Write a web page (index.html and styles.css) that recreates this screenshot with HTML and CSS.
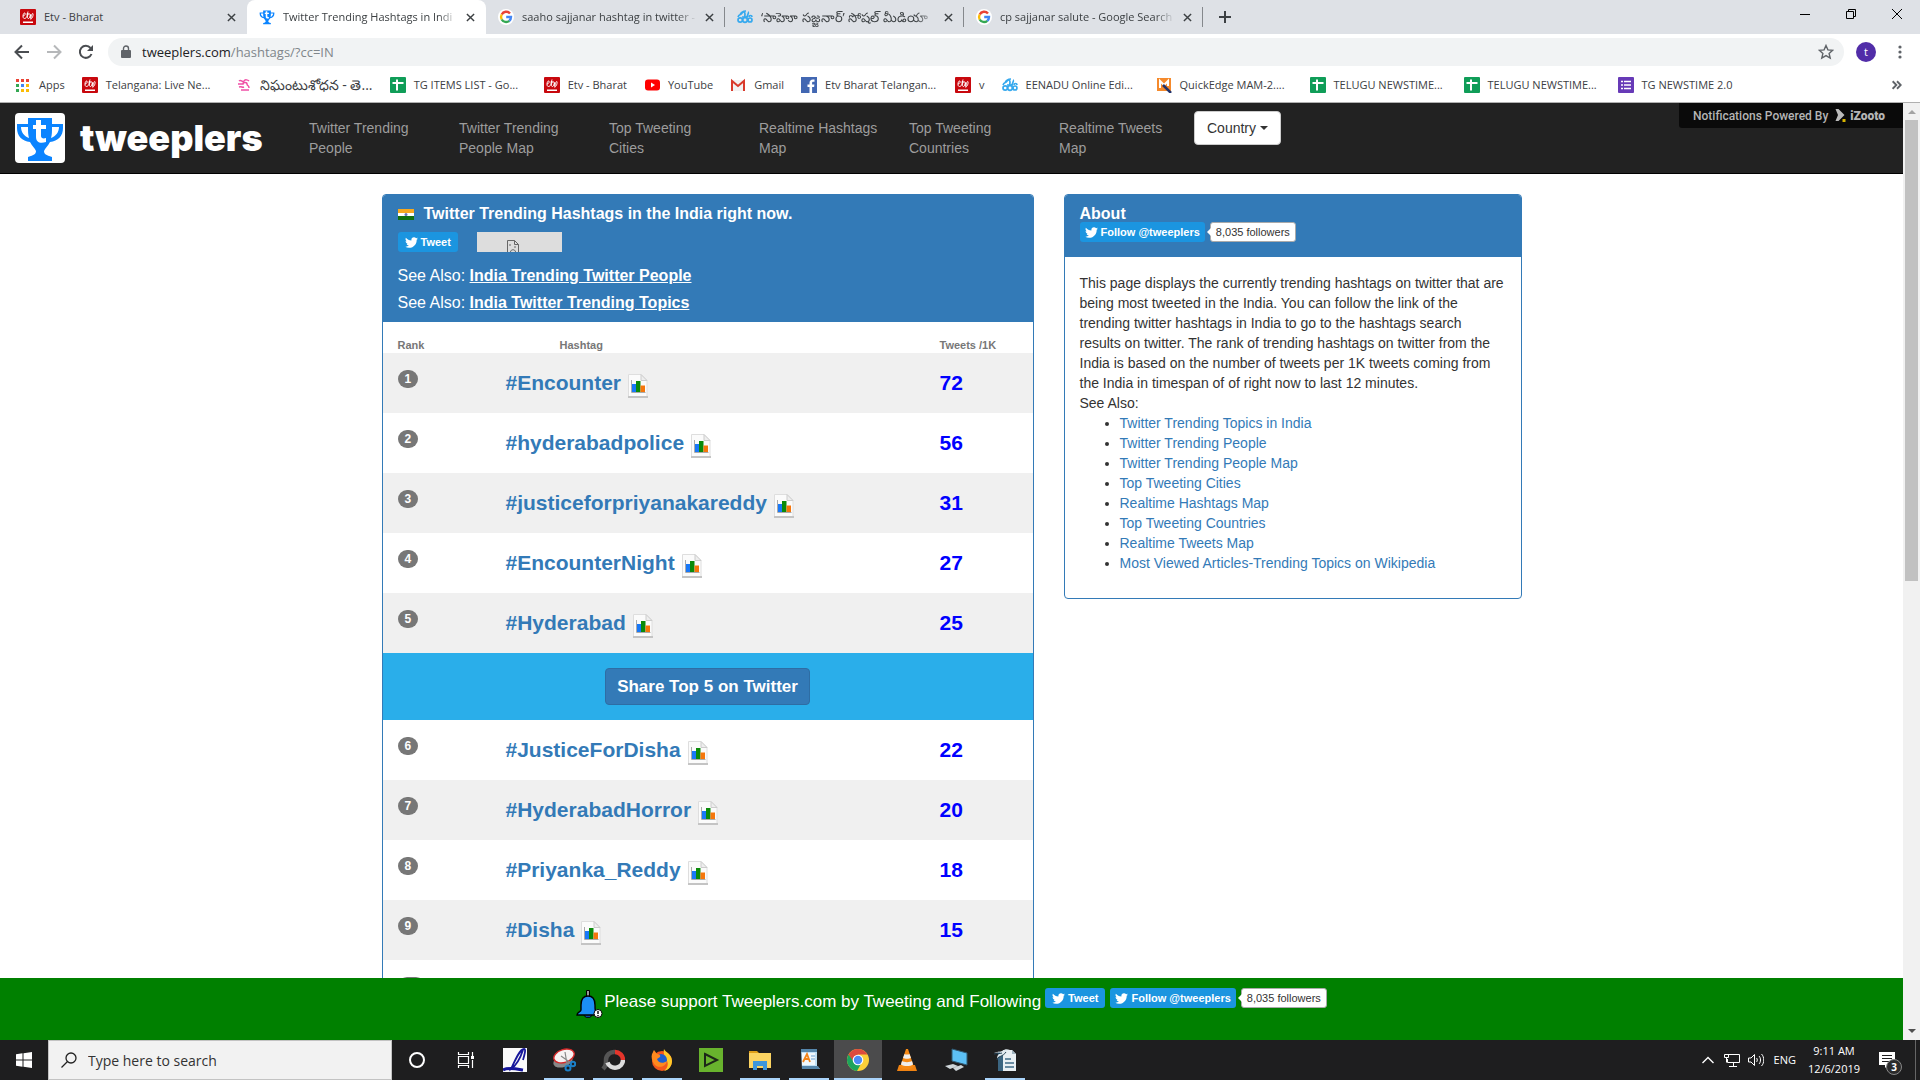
FILE: index.html
```html
<!DOCTYPE html>
<html lang="en">
<head>
<meta charset="utf-8">
<title>Twitter Trending Hashtags in India</title>
<link rel="stylesheet" href="styles.css">
</head>
<body>
<svg class="sprite" aria-hidden="true">
  <symbol id="etv" viewBox="0 0 16 16"><path fill="#c8080e" d="M1 0h14a1 1 0 0 1 1 1v14a1 1 0 0 1-1 1H1a1 1 0 0 1-1-1V1a1 1 0 0 1 1-1z"/><path fill="none" stroke="#fff" stroke-width="1" d="M3 7c2 0 3-3 1.500-3S2 9.500 4.500 9.500 7 6 8 2.500M6.500 5H10M8 4.500c-1 4-.5 5 .5 5s1.500-2 2-4c0 3 0 4 .7 4 1.500 0 2.500-5 1.500-5s-1.500 3-2 6"/><path fill="#fff" d="M3 12.500h10V14H3z"/></symbol>
  <symbol id="google" viewBox="0 0 16 16"><circle cx="8" cy="8" r="8" fill="#fff"/><g fill="none" stroke-width="2.400"><path stroke="#ea4335" d="M12 4.500A5 5 0 0 0 3.700 5.500"/><path stroke="#fbbc05" d="M3.700 5.500a5 5 0 0 0 0 5"/><path stroke="#34a853" d="M3.700 10.500a5 5 0 0 0 7.600 1.300"/><path stroke="#4285f4" d="M11.300 11.800A5 5 0 0 0 13 8H8.200"/></g></symbol>
  <symbol id="eenadu" viewBox="0 0 16 16"><g fill="none" stroke="#36a9ee" stroke-width="1.700"><circle cx="3.200" cy="11" r="2.200"/><circle cx="8" cy="11" r="2.300"/><circle cx="13" cy="11" r="2"/><path d="M1 8c1-3 3-2 4-4s3-1 3 1-1 3 1 3 2-5 3-5M5 8h6M12 8c0-2 3-2 3 0M3 6c1-3 4-4 6-4"/></g></symbol>
  <symbol id="sheet" viewBox="0 0 16 16"><rect width="16" height="16" rx="1" fill="#0f9d58"/><path stroke="#fff" stroke-width="2" d="M7 2.500v11M2.500 6h11"/></symbol>
  <symbol id="bird" viewBox="0 0 24 24"><path fill="#fff" d="M23.950 4.570a10 10 0 0 1-2.820.77 4.960 4.960 0 0 0 2.160-2.720c-.95.55-2 .95-3.130 1.180a4.920 4.920 0 0 0-8.380 4.480C7.690 8.090 4.070 6.130 1.640 3.160a4.820 4.820 0 0 0-.67 2.480c0 1.710.87 3.210 2.190 4.100a4.900 4.900 0 0 1-2.230-.62v.06a4.920 4.920 0 0 0 3.950 4.830 5 5 0 0 1-2.210.08 4.940 4.940 0 0 0 4.600 3.420A9.870 9.870 0 0 1 0 19.540a14 14 0 0 0 7.560 2.210c9.050 0 14-7.500 14-13.980 0-.21 0-.42-.02-.63a9.940 9.940 0 0 0 2.460-2.550z"/></symbol>
  <symbol id="chart" viewBox="0 0 20 24"><path fill="#fbfbfb" stroke="#dedede" d="M.5.500h12.500l6 6v17H.500z"/><path fill="#eee" stroke="#ccc" d="M13 .5v6h6z"/><path fill="#c4c4c4" d="M0 22h20v2H0z"/><path fill="none" stroke="#aaa" d="M3.500 6v12.500h14"/><path fill="#1878f8" d="M4 10h4v8H4z"/><path fill="#0a8a0a" d="M8 7h4.500v11H8z"/><path fill="#f5760c" d="M12.500 11.500H17V18h-4.500z"/></symbol>
  <symbol id="trophy" viewBox="0 0 50 50"><path fill="#0b84ff" d="M13 5h24v6h11v4c0 8-5 13-13 14-2 4-5 6-6 9 0 3 2 4 8 6v4H13v-4c6-2 8-3 8-6-1-3-4-5-6-9C7 28 2 23 2 15v-4h11z"/><path fill="#fff" d="M6 14h7c0 4 0 8 1 11-5-2-8-6-8-11zm38 0h-7c0 4 0 8-1 11 5-2 8-6 8-11zM21 7h5v5h5v4h-5v7c0 2 2 3 5 2v4c-6 2-10 0-10-5v-8h-3v-4h3z"/></symbol>
  <symbol id="close" viewBox="0 0 10 10"><path stroke="#3c4043" stroke-width="1.600" d="m1 1 8 8M9 1 1 9"/></symbol>
</svg>

<header class="browser">
  <div class="tabs">
    <div class="tab"><svg class="fav"><use href="#etv"/></svg><span class="tab-title">Etv - Bharat</span><button class="tab-close" aria-label="Close tab"><svg><use href="#close"/></svg></button></div>
    <div class="tab tab-active"><svg class="fav"><use href="#trophy"/></svg><span class="tab-title fade">Twitter Trending Hashtags in Indi</span><button class="tab-close" aria-label="Close tab"><svg><use href="#close"/></svg></button></div>
    <div class="tab tab-line"><svg class="fav"><use href="#google"/></svg><span class="tab-title fade">saaho sajjanar hashtag in twitter -</span><button class="tab-close" aria-label="Close tab"><svg><use href="#close"/></svg></button></div>
    <div class="tab tab-line"><svg class="fav"><use href="#eenadu"/></svg><span class="tab-title fade telugu" lang="te">‘సాహెూ సజ్జనార్’ సోషల్ మీడియా</span><button class="tab-close" aria-label="Close tab"><svg><use href="#close"/></svg></button></div>
    <div class="tab tab-line"><svg class="fav"><use href="#google"/></svg><span class="tab-title fade">cp sajjanar salute - Google Search</span><button class="tab-close" aria-label="Close tab"><svg><use href="#close"/></svg></button></div>
    <button class="new-tab" aria-label="New tab"><svg viewBox="0 0 12 12"><path stroke="#3c4043" stroke-width="2" d="M6 0v12M0 6h12"/></svg></button>
    <div class="window-buttons">
      <button aria-label="Minimize"><svg viewBox="0 0 10 10"><path stroke="#000" d="M0 5.500h10"/></svg></button>
      <button aria-label="Restore"><svg viewBox="0 0 10 10"><path fill="none" stroke="#000" d="M.5 2.500h7v7h-7zM2.500 2.500v-2h7v7h-2"/></svg></button>
      <button aria-label="Close"><svg viewBox="0 0 10 10"><path stroke="#000" d="m0 0 10 10M10 0 0 10"/></svg></button>
    </div>
  </div>
  <div class="toolbar">
    <button aria-label="Back"><svg viewBox="0 0 16 16"><path fill="none" stroke="#4a4d51" stroke-width="2" d="M15 8H2M8 1.500 1.500 8 8 14.500"/></svg></button>
    <button aria-label="Forward"><svg viewBox="0 0 16 16"><path fill="none" stroke="#b6b8ba" stroke-width="2" d="M1 8h13M8 1.500 14.500 8 8 14.500"/></svg></button>
    <button aria-label="Reload"><svg viewBox="0 0 16 16"><path fill="none" stroke="#4a4d51" stroke-width="2" d="M13.500 10A6 6 0 1 1 12.500 4"/><path fill="#4a4d51" d="M15 1v6H9z"/></svg></button>
    <div class="address">
      <svg class="lock" viewBox="0 0 10 14"><path fill="#5f6368" d="M1 5h8a1 1 0 0 1 1 1v6a1 1 0 0 1-1 1H1a1 1 0 0 1-1-1V6a1 1 0 0 1 1-1z"/><path fill="none" stroke="#5f6368" stroke-width="1.400" d="M2.500 6V3.500a2.500 2.500 0 0 1 5 0V6"/></svg>
      <span class="url">tweeplers.com<span>/hashtags/?cc=IN</span></span>
      <button class="star" aria-label="Bookmark this page"><svg viewBox="0 0 16 16"><path fill="none" stroke="#5f6368" stroke-width="1.400" d="m8 1.500 1.900 4.400 4.800.4-3.600 3.100 1.100 4.700L8 11.600l-4.200 2.500 1.100-4.700L1.300 6.300l4.800-.4z"/></svg></button>
    </div>
    <span class="avatar">t</span>
    <button class="kebab" aria-label="Menu"><svg viewBox="0 0 4 16"><g fill="#5f6368"><circle cx="2" cy="3" r="1.600"/><circle cx="2" cy="8" r="1.600"/><circle cx="2" cy="13" r="1.600"/></g></svg></button>
  </div>
  <nav class="bookmarks" aria-label="Bookmarks">
    <a href="#"><svg class="fav" viewBox="0 0 16 16"><path fill="#ea4335" d="M1 2h3v3H1zm5 0h3v3H6zm5 0h3v3h-3z"/><path fill="#34a853" d="M1 7h3v3H1zm0 5h3v3H1z"/><path fill="#4285f4" d="M6 7h3v3H6z"/><path fill="#fbbc05" d="M11 7h3v3h-3zm-5 5h3v3H6zm5 0h3v3h-3z"/></svg>Apps</a>
    <a href="#" class="long"><svg class="fav"><use href="#etv"/></svg>Telangana: Live Ne...</a>
    <a href="#" class="long telugu" lang="te"><svg class="fav" viewBox="0 0 16 16"><g fill="none" stroke="#f04fa6" stroke-width="1.500"><path d="M3 4c2-2 4 2 5 0s4-1 5 0M2 7h5c0-2 4-2 4 0s2 1 2 4M3 10c3-1 3 1 5 0M5 13h8"/></g></svg>నిఘంటుశోధన - తె...</a>
    <a href="#" class="long"><svg class="fav"><use href="#sheet"/></svg>TG ITEMS LIST - Go...</a>
    <a href="#"><svg class="fav"><use href="#etv"/></svg>Etv - Bharat</a>
    <a href="#"><svg class="fav" viewBox="0 0 16 16"><rect x="1" y="2.500" width="15" height="11" rx="3" fill="#f00"/><path fill="#fff" d="m7 5.500 4 2.500-4 2.500z"/></svg>YouTube</a>
    <a href="#"><svg class="fav" viewBox="0 0 16 16"><path fill="#f2f2f2" d="M1 3h14v11H1z"/><path fill="none" stroke="#d93a2b" stroke-width="2" d="M2 14V4l6 5 6-5v10"/></svg>Gmail</a>
    <a href="#" class="long"><svg class="fav" viewBox="0 0 16 16"><path fill="#4267b2" d="M0 0h16v16H0z"/><path fill="#fff" d="M8.500 16v-6H6.500V7.500h2V6c0-2.300 1.300-3.500 3.400-3.500h1.600v2.300h-1.200c-.9 0-1.200.5-1.200 1.200v1.500h2.300l-.3 2.500h-2v6z"/></svg>Etv Bharat Telangan...</a>
    <a href="#"><svg class="fav"><use href="#etv"/></svg>v</a>
    <a href="#" class="long"><svg class="fav"><use href="#eenadu"/></svg>EENADU Online Edi...</a>
    <a href="#" class="long"><svg class="fav" viewBox="0 0 16 16"><path fill="#f58a2c" d="M1 1h14v13H1z"/><path fill="none" stroke="#fff" stroke-width="2" d="M4 11V4l4 4 4-4v5"/><path stroke="#22336b" stroke-width="2.500" d="m7 8 8 8"/></svg>QuickEdge MAM-2....</a>
    <a href="#" class="long"><svg class="fav"><use href="#sheet"/></svg>TELUGU NEWSTIME...</a>
    <a href="#" class="long"><svg class="fav"><use href="#sheet"/></svg>TELUGU NEWSTIME...</a>
    <a href="#" class="long"><svg class="fav" viewBox="0 0 16 16"><rect width="16" height="16" rx="1" fill="#673ab7"/><path stroke="#fff" stroke-width="1.600" d="M3 4.500h2m1 0h7M3 8h2m1 0h7M3 11.500h2m1 0h7"/></svg>TG NEWSTIME 2.0</a>
    <button class="more" aria-label="More bookmarks"><svg viewBox="0 0 8 8"><path fill="none" stroke="#5f6368" stroke-width="1.500" d="m.5 1 3 3-3 3m3.500-6 3 3-3 3"/></svg></button>
  </nav>
</header>

<div class="viewport">
  <div class="page">
    <header class="navbar">
      <a href="#" class="brand"><svg viewBox="0 0 50 50"><rect width="50" height="50" rx="4" fill="#fff"/><use href="#trophy"/></svg>tweeplers</a>
      <nav class="menu" aria-label="Main">
        <a href="#">Twitter Trending People</a>
        <a href="#">Twitter Trending People Map</a>
        <a href="#">Top Tweeting Cities</a>
        <a href="#">Realtime Hashtags Map</a>
        <a href="#">Top Tweeting Countries</a>
        <a href="#">Realtime Tweets Map</a>
      </nav>
      <button class="country">Country<i class="caret"></i></button>
      <a href="#" class="powered">Notifications Powered By <svg viewBox="0 0 10 14"><path fill="#bbb" d="M0 0h3l6 6-6 6H0l2.500-6z"/><path fill="#d8b400" d="M7 10h3v3H7z"/></svg><b>iZooto</b></a>
    </header>

    <main class="content">
      <section class="panel">
        <div class="panel-head">
          <h1><svg class="flag" viewBox="0 0 16 11"><path fill="#f7a820" d="M0 0h16v4H0z"/><path fill="#fff" d="M0 4h16v3H0z"/><path fill="#12700f" d="M0 7h16v4H0z"/><circle cx="8" cy="5.500" r="1.500" fill="#6a74b8"/></svg>Twitter Trending Hashtags in the India right now.</h1>
          <div class="social">
            <a href="#" class="tw"><svg><use href="#bird"/></svg>Tweet</a>
            <span class="blocked"><svg viewBox="0 0 12 14"><path fill="none" stroke="#666" d="M.5 14V.500h7l4 4V14M7.500.500v4h4"/><path stroke="#666" d="M3 4v2M8 6v2"/><path fill="none" stroke="#666" d="M3.500 12c0-3 5-3 5 0"/></svg></span>
          </div>
          <p>See Also: <a href="#">India Trending Twitter People</a></p>
          <p>See Also: <a href="#">India Twitter Trending Topics</a></p>
        </div>
        <table class="ranks">
          <thead><tr><th class="c-rank">Rank</th><th class="c-tag">Hashtag</th><th class="c-num">Tweets /1K</th></tr></thead>
          <tbody>
            <tr class="odd"><td><span class="badge">1</span></td><td><a href="#">#Encounter<svg><use href="#chart"/></svg></a></td><td>72</td></tr>
            <tr><td><span class="badge">2</span></td><td><a href="#">#hyderabadpolice<svg><use href="#chart"/></svg></a></td><td>56</td></tr>
            <tr class="odd"><td><span class="badge">3</span></td><td><a href="#">#justiceforpriyanakareddy<svg><use href="#chart"/></svg></a></td><td>31</td></tr>
            <tr><td><span class="badge">4</span></td><td><a href="#">#EncounterNight<svg><use href="#chart"/></svg></a></td><td>27</td></tr>
            <tr class="odd"><td><span class="badge">5</span></td><td><a href="#">#Hyderabad<svg><use href="#chart"/></svg></a></td><td>25</td></tr>
            <tr class="share"><td colspan="3"><button>Share Top 5 on Twitter</button></td></tr>
            <tr><td><span class="badge">6</span></td><td><a href="#">#JusticeForDisha<svg><use href="#chart"/></svg></a></td><td>22</td></tr>
            <tr class="odd"><td><span class="badge">7</span></td><td><a href="#">#HyderabadHorror<svg><use href="#chart"/></svg></a></td><td>20</td></tr>
            <tr><td><span class="badge">8</span></td><td><a href="#">#Priyanka_Reddy<svg><use href="#chart"/></svg></a></td><td>18</td></tr>
            <tr class="odd"><td><span class="badge">9</span></td><td><a href="#">#Disha<svg><use href="#chart"/></svg></a></td><td>15</td></tr>
            <tr><td><span class="badge">10</span></td><td></td><td></td></tr>
          </tbody>
        </table>
      </section>

      <aside class="panel">
        <div class="panel-head about-head">
          <h2>About</h2>
          <div class="social">
            <a href="#" class="tw tw-follow"><svg><use href="#bird"/></svg>Follow @tweeplers</a>
            <a href="#" class="count">8,035 followers</a>
          </div>
        </div>
        <div class="about-body">
          <p>This page displays the currently trending hashtags on twitter that are being most tweeted in the India. You can follow the link of the trending twitter hashtags in India to go to the hashtags search results on twitter. The rank of trending hashtags on twitter from the India is based on the number of tweets per 1K tweets coming from the India in timespan of of right now to last 12 minutes.</p>
          <p>See Also:</p>
          <ul>
            <li><a href="#">Twitter Trending Topics in India</a></li>
            <li><a href="#">Twitter Trending People</a></li>
            <li><a href="#">Twitter Trending People Map</a></li>
            <li><a href="#">Top Tweeting Cities</a></li>
            <li><a href="#">Realtime Hashtags Map</a></li>
            <li><a href="#">Top Tweeting Countries</a></li>
            <li><a href="#">Realtime Tweets Map</a></li>
            <li><a href="#">Most Viewed Articles-Trending Topics on Wikipedia</a></li>
          </ul>
        </div>
      </aside>
    </main>

    <footer class="support">
      <svg class="bell" viewBox="0 0 27 28"><path fill="#999" stroke="#000" d="M10.500.500h3v7h-3z"/><path fill="#0a4a9e" stroke="#000" d="M8 24c0 5 8 5 8 0z"/><path fill="#1b8ef5" stroke="#000" stroke-width="1.400" d="M12 6c-5 0-7 4-7 9v5c0 2-4 2-4 5h20v-3c-2-1-2-2-2-7 0-5-2-9-7-9z"/><circle cx="22" cy="23.500" r="4" fill="#fff" stroke="#000"/><path stroke="#000" stroke-width="1.400" d="M22 21v3m0 1v1.200"/></svg>
      <span>Please support Tweeplers.com by Tweeting and Following</span>
      <div class="social">
        <a href="#" class="tw"><svg><use href="#bird"/></svg>Tweet</a>
        <a href="#" class="tw tw-follow"><svg><use href="#bird"/></svg>Follow @tweeplers</a>
        <a href="#" class="count">8,035 followers</a>
      </div>
    </footer>
  </div>
  <div class="scrollbar"><i class="up"></i><div class="track"><div class="thumb"></div></div><i class="down"></i></div>
</div>

<footer class="taskbar">
  <button class="start" aria-label="Start"><svg viewBox="0 0 16 16"><path fill="#fff" d="M0 2.200 6.500 1.300v6.200H0zM7.500 1.200 16 0v7.500H7.500zM0 8.500h6.500v6.200L0 13.800zm7.500 0H16V16l-8.500-1.200z"/></svg></button>
  <label class="search"><svg viewBox="0 0 16 16"><circle cx="10" cy="6" r="5" fill="none" stroke="#222" stroke-width="1.300"/><path stroke="#222" stroke-width="1.300" d="M6.500 9.500.500 15.500"/></svg><input type="text" placeholder="Type here to search" aria-label="Search"></label>
  <div class="apps">
    <button aria-label="Cortana"><svg viewBox="0 0 24 24"><circle cx="12" cy="12" r="7" fill="none" stroke="#fff" stroke-width="2"/></svg></button>
    <button aria-label="Task view"><svg viewBox="0 0 24 24"><path fill="none" stroke="#fff" stroke-width="1.200" d="M4.500 8.500h10v7h-10zM4.500 4v2.500h10V4M4.500 20v-2.500h10V20M18.500 4v4m0 4v8"/><path fill="#fff" d="M17 8h3v3h-3z"/></svg></button>
    <button aria-label="Editor"><svg viewBox="0 0 24 24"><path fill="#fafafa" d="M0 0h24v24H0z"/><path fill="none" stroke="#16169b" stroke-width="1.800" d="M20 12c2-7 3-11 1-11-4 0-8 9-13 20 6-4 9-10 12-19"/><path fill="none" stroke="#16169b" stroke-width="3" d="M0 22c5-3 14-1 20 0"/></svg></button>
    <button class="open" aria-label="Snipping Tool"><svg viewBox="0 0 24 24"><ellipse cx="11" cy="13" rx="10" ry="6" fill="#888" transform="rotate(-20 11 13)"/><ellipse cx="12" cy="8" rx="10.500" ry="6.500" fill="#f6f2f2" stroke="#d42a2a" stroke-width="1.400" transform="rotate(-18 12 8)"/><path stroke="#888" stroke-width="1.200" d="m13 4 2 12M9 8l10 7"/><g fill="none" stroke="#1c80c8" stroke-width="2"><circle cx="16" cy="20" r="2.500"/><circle cx="21" cy="16" r="2.200"/></g></svg></button>
    <button class="open" aria-label="Recorder"><svg viewBox="0 0 24 24"><g fill="none" stroke-width="4.500"><path stroke="#555" d="M2 21c3-3 3-5 3-9a8 8 0 0 1 9-8"/><path stroke="#e5352b" d="M14 4a8 8 0 0 1 8 8"/><path stroke="#ddd" d="M22 12a8 8 0 0 1-15.500 2.500"/></g></svg></button>
    <button class="open" aria-label="Firefox"><svg viewBox="0 0 24 24"><circle cx="12" cy="13" r="10" fill="#f4581c"/><path fill="#ffc929" d="M14 1c1 3 8 5 8 12 0 5-3 9-8 10 4-3 5-8 2-12-1-2-3-6-2-10z"/><circle cx="11" cy="12" r="6" fill="#1d5fd0"/><path fill="#ff8a1e" d="M2 6c1-1 1-3 2-4l3 4c2 0 4 1 3 3l-3 2c1 4 6 5 10 2-1 6-9 8-13 3C2 13 1 9 2 6z"/></svg></button>
    <button aria-label="Camtasia"><svg viewBox="0 0 24 24"><path fill="#68b32d" d="M0 0h24v24H0z"/><path fill="none" stroke="#1c2718" stroke-width="2" d="m6 6 12 6-12 6z"/></svg></button>
    <button class="open" aria-label="File Explorer"><svg viewBox="0 0 24 24"><path fill="#e0a019" d="M1 3h8l2 2H1z"/><path fill="#fcd462" d="M1 5h22v15H1z"/><path fill="#3d96da" d="M5 13h14v9h-4v-4H9v4H5z"/></svg></button>
    <button class="open" aria-label="WordPad"><svg viewBox="0 0 24 24"><path fill="#bfe0f6" d="M4 1h16v17l3 3H5z"/><path fill="#5586ab" d="M4 1h16v3H4zM5 21h18l-2-3H5z"/><path fill="#f0f8fd" d="M5 5h13v12H5z"/><path fill="none" stroke="#f28318" stroke-width="1.800" d="m6 14 4-8 3 8M7 11h5"/><path stroke="#6ba1d5" d="M14 8h4m-4 3h4"/></svg></button>
    <button class="open current" aria-label="Chrome"><svg viewBox="0 0 24 24"><circle cx="12" cy="12" r="11" fill="#fbcf38"/><path fill="#dd4b3e" d="M2.500 6.500a11 11 0 0 1 19 0H12L7 14z"/><path fill="#1ca45c" d="M2.500 6.500A11 11 0 0 0 11 23l5-9-8 0z"/><circle cx="12" cy="12" r="5.300" fill="#fff"/><circle cx="12" cy="12" r="4.200" fill="#4c8bf5"/></svg></button>
    <button aria-label="VLC"><svg viewBox="0 0 24 24"><path fill="#f08312" d="m4 17-2 6h20l-2-6z"/><path fill="#f58a16" d="M11 1h2l6 18c-3 3-11 3-14 0z"/><path fill="#eee" d="m9.500 6-1.500 4c2 1 6 1 8 0l-1.500-4c-1 .8-4 .8-5 0zM7 13l-1 3.500c3 2 9 2 12 0L17 13c-2 1.500-8 1.500-10 0z"/></svg></button>
    <button aria-label="Remote Desktop"><svg viewBox="0 0 24 24"><path fill="#5cc0f5" d="m8 1 15 4v12L8 13z"/><path fill="none" stroke="#315a73" d="m8 1 15 4v12L8 13z"/><path fill="#cfd6da" d="m1 18 8-2 5 2-8 3zM9 20l8-3 3 2-8 4z"/></svg></button>
    <button class="open" aria-label="Writer"><svg viewBox="0 0 24 24"><path fill="#3b6580" d="M5 4h14v19H5z"/><path fill="#e9f0f4" d="M10 2h9l4 4v17H10z"/><path fill="#9fb4c0" d="M19 2v4h4z"/><path stroke="#3f6b86" stroke-width="1.600" d="M12 11h6m-6 4h9m-9 4h9"/><path fill="#dfe8ed" d="M1 5c5-2 6-1 8-2 3-2 5-2 8-1-4 0-4 3-7 5-2 2-5 1-6 4 0-4 2-5 4-6-3-1-4 0-7 0z"/><path fill="none" stroke="#274456" d="M1 6c4-1 6 0 8-1m-5 7c0-4 6-3 9-8"/></svg></button>
  </div>
  <div class="tray">
    <svg class="t-up" viewBox="0 0 12 8"><path fill="none" stroke="#fff" stroke-width="1.400" d="m.5 7 5.500-5.500L11.500 7"/></svg>
    <svg class="t-net" viewBox="0 0 16 14"><path fill="none" stroke="#fff" d="M4 1.500h11.500v8H3.500V6M9.500 10v3M5 13.500h8M.5 1.500h4v3h-4zM2.500 4.500v5"/></svg>
    <svg class="t-vol" viewBox="0 0 16 14"><path fill="none" stroke="#fff" d="M.5 5h2.500l3.500-3.500v11L3 9H.500zM8.500 5c1 1 1 3 0 4M11 3c2 2 2 6 0 8M13.500 1c3 3 3 9 0 12"/></svg>
    <span class="lang">ENG</span>
    <div class="clock"><span>9:11 AM</span><span>12/6/2019</span></div>
    <div class="notes"><svg viewBox="0 0 16 16"><path fill="#fff" d="M0 0h16v13H9l-3 3v-3H0z"/><path stroke="#1e1e1f" d="M3 3.500h10M3 6.500h10M3 9.500h7"/></svg><b>3</b></div>
  </div>
</footer>
</body>
</html>
```

FILE: styles.css
```css
* { box-sizing: border-box; }
body {
  margin: 0;
  height: 100vh;
  display: flex;
  flex-direction: column;
  overflow: hidden;
  font-family: "Liberation Sans", Arial, sans-serif;
  font-size: 14px;
  line-height: 20px;
  color: #333;
}
button { border: 0; padding: 0; background: none; font: inherit; color: inherit; }
a { color: #337ab7; text-decoration: none; }
h1, h2, p, ul { margin: 0; }
svg { display: block; flex: none; }
.sprite { position: absolute; width: 0; height: 0; }

/* Browser chrome */
.browser {
  flex: none;
  font-family: "Open Sans", "Noto Sans", sans-serif;
  font-size: 11px;
  color: #3c4043;
  background: #fff;
  border-bottom: 1px solid #b0b0b0;
}
.fav { width: 16px; height: 16px; }
.tabs { display: flex; height: 34px; padding-left: 8px; background: #dee1e6; }
.tab {
  flex: 0 1 239px;
  min-width: 0;
  display: flex;
  align-items: center;
  gap: 8px;
  padding: 0 11px 0 12px;
  background-repeat: no-repeat;
}
.tab-active { background: #fff; border-radius: 8px 8px 0 0; }
.tab-line {
  background-image: linear-gradient(#85888c, #85888c);
  background-size: 1px 20px;
  background-position: right center;
}
.tab-title { flex: 1; min-width: 0; overflow: hidden; white-space: nowrap; }
.tab-title.fade { mask-image: linear-gradient(to left, transparent, #000 20px); }
.telugu, .bookmarks .telugu { font-size: 14px; }
.tab-title.telugu { font-size: 13px; }
.tab-close svg { width: 9px; height: 9px; }
.new-tab { width: 44px; display: grid; place-items: center; }
.new-tab svg { width: 12px; height: 12px; }
.window-buttons { display: flex; margin-left: auto; height: 28px; }
.window-buttons button { width: 46px; display: grid; place-items: center; }
.window-buttons svg { width: 10px; height: 10px; }

.toolbar { display: flex; align-items: center; height: 36px; padding: 0 12px 0 14px; gap: 16px; }
.toolbar svg { width: 16px; height: 16px; }
.address {
  flex: 1;
  display: flex;
  align-items: center;
  height: 28px;
  margin-left: -2px;
  padding: 0 10px 0 12px;
  border-radius: 14px;
  background: #f1f3f4;
}
.address .lock { width: 10px; height: 14px; margin: 0 11px 0 1px; }
.url { flex: 1; font-size: 13px; color: #202124; }
.url span { color: #80868b; }
.avatar {
  width: 20px;
  height: 20px;
  margin-left: -4px;
  border-radius: 50%;
  background: #512da8;
  color: #fff;
  text-align: center;
  line-height: 19px;
}

.bookmarks { display: flex; align-items: center; height: 32px; padding: 0 18px 3px 15px; overflow: hidden; }
.bookmarks a {
  display: flex;
  flex: none;
  align-items: center;
  gap: 8px;
  padding-right: 17px;
  white-space: nowrap;
  color: #3c4043;
}
.bookmarks a.long { width: 154px; padding-right: 0; }
.more { margin-left: auto; }
.more svg { width: 10px; height: 10px; }

/* Web page area */
.viewport { flex: 1; min-height: 0; display: flex; background: #fff; }
.page { position: relative; flex: 1; overflow: hidden; }
.navbar {
  position: relative;
  display: flex;
  align-items: flex-start;
  height: 71px;
  padding-left: 15px;
  background: #222;
  border-bottom: 1px solid #000;
}
.brand {
  display: flex;
  align-items: center;
  gap: 15px;
  width: 294px;
  padding-top: 10px;
  color: #fff;
  font: 900 36px/46px Inter, sans-serif;
}
.brand svg { width: 50px; height: 50px; }
.menu { display: flex; padding-top: 15px; }
.menu a { width: 150px; padding-right: 30px; color: #9d9d9d; }
.country {
  display: flex;
  align-items: center;
  gap: 4px;
  margin: 8px 0 0 -15px;
  height: 34px;
  padding: 0 12px;
  border: 1px solid #ccc;
  border-radius: 4px;
  background: #fff;
}
.caret { border: 4px solid transparent; border-top-color: #333; border-bottom: 0; }
.powered {
  position: absolute;
  top: 0;
  right: 0;
  display: flex;
  align-items: center;
  height: 25px;
  padding: 0 18px 0 14px;
  border-radius: 0 0 0 3px;
  background: #0a0a0a;
  color: #b5b5b5;
  font: 500 12px Roboto, sans-serif;
}
.powered svg { width: 11px; height: 14px; margin: 0 4px 0 7px; }
.powered b { font-weight: 900; }

.content {
  display: grid;
  grid-template-columns: 652fr 458fr;
  align-items: start;
  gap: 30px;
  width: 1140px;
  max-width: 100%;
  margin: 20px auto 0;
}
.panel { border: 1px solid #337ab7; border-radius: 4px; background: #fff; overflow: hidden; }
.panel-head { padding: 10px 15px 6px; background: #337ab7; color: #fff; font-size: 16px; line-height: 27px; }
.panel-head h1, .panel-head h2 { display: flex; align-items: center; font-size: 16px; line-height: 18px; }
.panel-head p a { color: #fff; font-weight: bold; text-decoration: underline; }
.flag { width: 16px; height: 11px; margin-right: 10px; }
.social { display: flex; }
.panel-head .social { margin: 9px 0 10px; }
.panel-head.about-head { padding-bottom: 15px; }
.about-head .social { margin: 0; }
.about-head h2 { line-height: 17px; }
.tw {
  display: flex;
  align-items: center;
  gap: 3px;
  height: 20px;
  padding: 0 7px;
  border-radius: 3px;
  background: #1b95e0;
  color: #fff;
  font-size: 11px;
  font-weight: bold;
  white-space: nowrap;
}
.tw-follow { padding: 0 5px; }
.tw svg { width: 13px; height: 13px; }
.blocked { width: 85px; height: 20px; margin-left: 19px; padding: 8px 0 0 30px; background: #ddd; overflow: hidden; }
.blocked svg { width: 12px; height: 14px; }
.count {
  position: relative;
  height: 20px;
  margin-left: 5px;
  padding: 0 5px;
  border: 1px solid #aaa;
  border-radius: 3px;
  background: #fff;
  color: #333;
  font-size: 11px;
  line-height: 18px;
  white-space: nowrap;
}
.count::before {
  content: "";
  position: absolute;
  left: -4px;
  top: 5px;
  border: 4px solid transparent;
  border-right-color: #fff;
  border-left: 0;
}

.ranks { width: 100%; table-layout: fixed; border-collapse: collapse; }
.ranks th {
  height: 31px;
  padding: 0;
  vertical-align: bottom;
  text-align: left;
  font-size: 11px;
  line-height: 16px;
  color: #777;
  white-space: nowrap;
}
.ranks .c-rank { width: 123px; padding-left: 15px; }
.ranks .c-tag { padding-left: 54px; }
.ranks .c-num { width: 93px; }
.ranks td { height: 60px; padding: 0; font-size: 21px; font-weight: bold; color: #00f; }
.ranks td:first-child { vertical-align: top; padding: 17px 0 0 15px; }
.ranks .odd { background: #f0f0f0; }
.ranks td a { display: flex; align-items: center; gap: 7px; }
.ranks td svg { width: 20px; height: 24px; margin-top: 5px; }
.badge {
  display: block;
  width: max-content;
  min-width: 20px;
  padding: 0 7px;
  border-radius: 9px;
  background: #777;
  color: #fff;
  font-size: 12px;
  line-height: 18px;
}
.ranks .share td:first-child { height: 67px; padding: 0; vertical-align: middle; text-align: center; background: #2aaeea; }
.share button {
  height: 37px;
  padding: 0 11px;
  border: 1px solid #2e6da4;
  border-radius: 4px;
  background: #337ab7;
  color: #fff;
  font-size: 17px;
  font-weight: bold;
}
.about-body { padding: 16px 15px 15px; }
.about-body ul { margin-bottom: 10px; padding-left: 40px; }

.support {
  position: absolute;
  left: 0;
  right: 0;
  bottom: 0;
  display: flex;
  justify-content: center;
  height: 62px;
  padding-top: 10px;
  background: #008000;
  color: #fff;
  font-size: 17px;
  line-height: 28px;
}
.bell { width: 27px; height: 28px; margin: 2px 1px 0 0; }
.support .social { gap: 5px; margin-left: 4px; }
.support .count { margin-left: 0; }

.scrollbar {
  flex: none;
  width: 17px;
  display: flex;
  flex-direction: column;
  align-items: center;
  padding: 7px 0;
  background: #f1f1f1;
}
.scrollbar i { border: 4px solid transparent; }
.scrollbar .up { border-top: 0; border-bottom-color: #a3a3a3; }
.scrollbar .down { border-bottom: 0; border-top-color: #505050; }
.track { flex: 1; width: 13px; margin: 6px 0; }
.thumb { height: 51%; background: #c1c1c1; }

/* Desktop taskbar */
.taskbar {
  flex: none;
  display: flex;
  height: 40px;
  background: #1e1e1f;
  color: #fff;
  font-family: "Open Sans", sans-serif;
}
.start { width: 48px; display: grid; place-items: center; }
.start svg { width: 16px; height: 16px; }
.search {
  flex: 0 1 344px;
  display: flex;
  align-items: center;
  gap: 11px;
  padding: 0 12px;
  border: 1px solid #c3c3c3;
  background: #f2f2f2;
}
.search svg { width: 16px; height: 16px; }
.search input { flex: 1; min-width: 0; border: 0; padding: 0; background: none; font: 14px "Open Sans", sans-serif; }
.search input::placeholder { color: #333; opacity: 1; }
.apps { display: flex; gap: 1px; margin-left: 1px; }
.apps button { width: 48px; display: grid; place-items: center; }
.apps svg { width: 24px; height: 24px; }
.apps .open {
  background: linear-gradient(#aad4fa, #aad4fa) no-repeat center bottom / 40px 2px;
}
.apps .current { background-color: #4b4b4c; background-size: 100% 2px; }
.tray { display: flex; align-items: center; margin-left: auto; padding-right: 4px; }
.t-up { width: 12px; height: 8px; margin-right: 10px; }
.t-net { width: 16px; height: 14px; margin-right: 8px; }
.t-vol { width: 16px; height: 14px; margin-right: 10px; }
.lang { font-size: 11px; }
.clock { display: flex; flex-direction: column; width: 76px; text-align: center; font-size: 11px; line-height: 18px; }
.notes { position: relative; width: 44px; height: 40px; padding: 12px 0 0 7px; border-right: 1px solid #666; }
.notes svg { width: 16px; height: 16px; }
.notes b {
  position: absolute;
  left: 14px;
  top: 19px;
  width: 16px;
  height: 16px;
  border: 1px solid #888;
  border-radius: 50%;
  background: #2b2b2c;
  font-size: 10px;
  line-height: 14px;
  text-align: center;
}
```
